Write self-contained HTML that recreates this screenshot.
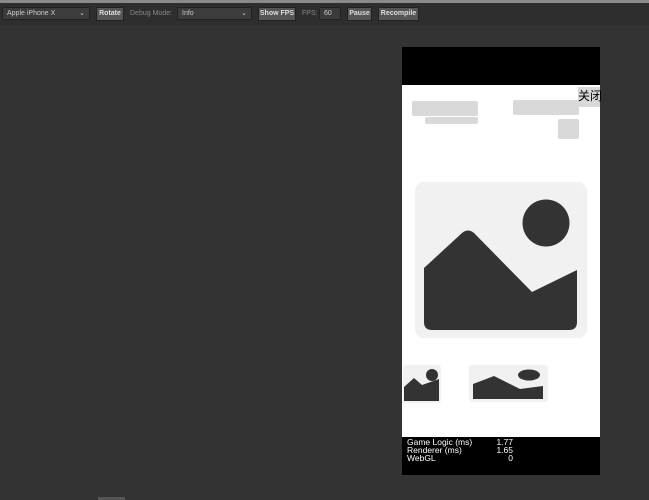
<!DOCTYPE html>
<html><head><meta charset="utf-8"><style>
body{margin:0;width:649px;height:500px;background:#333;overflow:hidden;position:relative;font-family:"Liberation Sans",sans-serif;}
.tb{position:absolute;left:0;top:0;width:649px;height:25px;background:#2e2e2e;border-top:3px solid #8a8a8a;box-sizing:border-box;}
.a{position:absolute;font-size:7px;color:#ccc;}
.sel{position:absolute;top:7px;height:13px;background:#3c3c3c;border:1px solid #222;box-sizing:border-box;font-size:7px;color:#ccc;line-height:11px;padding-left:4px;}
.btn{position:absolute;top:7px;height:14px;background:#555;border:1px solid #222;box-sizing:border-box;font-size:7px;font-weight:bold;color:#ddd;line-height:12px;text-align:center;}
.lab{position:absolute;top:8px;font-size:7px;color:#888;line-height:12px;}
.g{position:absolute;background:#d9d9d9;border-radius:2px;}
.st{position:absolute;font-size:8.5px;color:#fff;line-height:8.5px;}
</style></head><body>
<div class="tb"></div>
<div class="sel" style="left:2px;width:88px">Apple iPhone X<span style="position:absolute;right:4px">⌄</span></div>
<div class="btn" style="left:96px;width:28px">Rotate</div>
<div class="lab" style="left:130px">Debug Mode:</div>
<div class="sel" style="left:177px;width:75px">Info<span style="position:absolute;right:4px">⌄</span></div>
<div class="btn" style="left:258px;width:38px">Show FPS</div>
<div class="lab" style="left:302px">FPS:</div>
<div class="sel" style="left:319px;width:22px;background:#3a3a3a">60</div>
<div class="btn" style="left:347px;width:25px">Pause</div>
<div class="btn" style="left:378px;width:41px">Recompile</div>

<div style="position:absolute;left:402px;top:47px;width:198px;height:38px;background:#000"></div>
<div style="position:absolute;left:402px;top:85px;width:198px;height:352px;background:#fff"></div>
<div class="g" style="left:412px;top:101px;width:66px;height:15px"></div>
<div class="g" style="left:425px;top:117px;width:53px;height:7px"></div>
<div class="g" style="left:513px;top:100px;width:66px;height:15px"></div>
<div class="g" style="left:558px;top:119px;width:21px;height:20px"></div>
<div class="g" style="left:578px;top:87px;width:22px;height:20px;border-radius:0"></div>
<div style="position:absolute;left:578px;top:89px;font-size:12px;color:#000;font-family:'Liberation Sans','Noto Sans CJK SC',sans-serif;line-height:14px">关闭</div>

<svg style="position:absolute;left:0;top:0" width="649" height="500" viewBox="0 0 649 500">
<rect x="415" y="182" width="172" height="156" rx="9" fill="#f1f1f1"/>
<path d="M424 268 L462 233 Q468 228 474 233 L532 292 L577 270 L577 322 Q577 330 569 330 L432 330 Q424 330 424 322 Z" fill="#333"/>
<circle cx="546" cy="223" r="23.5" fill="#333"/>
<rect x="403" y="365" width="38" height="38" rx="3" fill="#f1f1f1"/>
<path d="M404 387 L414 378 L422 385 L439 379 L439 401 L404 401 Z" fill="#333"/>
<circle cx="432" cy="375" r="6" fill="#333"/>
<rect x="469" y="365" width="79" height="37" rx="3" fill="#f1f1f1"/>
<path d="M473 384 L494 376 L520 389 L543 386 L543 399 L473 399 Z" fill="#333"/>
<ellipse cx="529" cy="375" rx="11" ry="5.5" fill="#333"/>
<rect x="98" y="497" width="27" height="3" fill="#555"/>
</svg>

<div style="position:absolute;left:402px;top:437px;width:198px;height:38px;background:#000"></div>
<div class="st" style="left:407px;top:438px">Game Logic (ms)</div>
<div class="st" style="left:407px;top:446px">Renderer (ms)</div>
<div class="st" style="left:407px;top:454px">WebGL</div>
<div class="st" style="left:480px;top:438px;width:33px;text-align:right">1.77</div>
<div class="st" style="left:480px;top:446px;width:33px;text-align:right">1.65</div>
<div class="st" style="left:480px;top:454px;width:33px;text-align:right">0</div>
</body></html>
